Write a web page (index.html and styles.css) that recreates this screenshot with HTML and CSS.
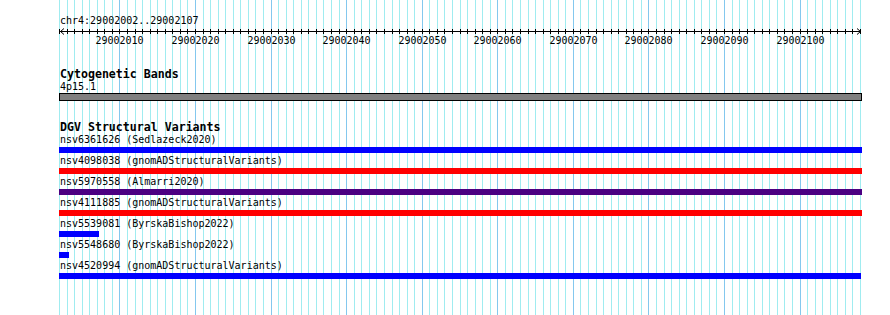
FILE: index.html
```html
<!DOCTYPE html>
<html lang="en">

<head>
    <meta charset="UTF-8">
    <meta name="viewport" content="width=device-width, initial-scale=1.0">
    <title>chr4:29002002..29002107</title>
    <link rel="stylesheet" href="styles.css">
</head>

<body>
    <div class="view">
        <div class="grid" id="grid"></div>

        <div class="ruler">
            <div class="location">chr4:29002002..29002107</div>
            <svg class="axis" id="axis" width="803" height="7">
                <line class="axis-line" x1="1" y1="4.5" x2="802" y2="4.5"></line>
                <polyline class="arrow" points="5,1.5 1.5,4.5 5,7.5"></polyline>
                <polyline class="arrow" points="798,1.5 801.5,4.5 798,7.5"></polyline>
            </svg>
            <div class="ticklabels" id="ticklabels"></div>
        </div>

        <div class="track bands">
            <div class="track-label">Cytogenetic Bands</div>
            <div class="feature-label">4p15.1</div>
            <div class="band"></div>
        </div>

        <div class="track dgv">
            <div class="track-label">DGV Structural Variants</div>
            <div class="feature">
                <div class="feature-label">nsv6361626 (Sedlazeck2020)</div>
                <div class="bar blue"></div>
            </div>
            <div class="feature">
                <div class="feature-label">nsv4098038 (gnomADStructuralVariants)</div>
                <div class="bar red"></div>
            </div>
            <div class="feature">
                <div class="feature-label">nsv5970558 (Almarri2020)</div>
                <div class="bar purple"></div>
            </div>
            <div class="feature">
                <div class="feature-label">nsv4111885 (gnomADStructuralVariants)</div>
                <div class="bar red"></div>
            </div>
            <div class="feature">
                <div class="feature-label">nsv5539081 (ByrskaBishop2022)</div>
                <div class="bar blue" style="width: 40px"></div>
            </div>
            <div class="feature">
                <div class="feature-label">nsv5548680 (ByrskaBishop2022)</div>
                <div class="bar blue" style="width: 10px"></div>
            </div>
            <div class="feature">
                <div class="feature-label">nsv4520994 (gnomADStructuralVariants)</div>
                <div class="bar blue" style="width: 802px"></div>
            </div>
        </div>
    </div>

    <script>
        var start = 29002002;
        var end = 29002107;
        var scale = 7.557; // pixels per base
        var svgNS = 'http://www.w3.org/2000/svg';

        var grid = document.getElementById('grid');
        var axis = document.getElementById('axis');
        var labels = document.getElementById('ticklabels');

        for (var k = 0; k <= end - start + 1; k++) {
            var pos = start + k;
            var x = Math.round(k * scale);
            var major = pos % 10 === 0;

            var line = document.createElement('div');
            line.className = major ? 'gridline major' : 'gridline';
            line.style.left = x + 'px';
            grid.appendChild(line);

            var tick = document.createElementNS(svgNS, 'line');
            tick.setAttribute('class', 'tick');
            tick.setAttribute('x1', x + 0.5);
            tick.setAttribute('x2', x + 0.5);
            tick.setAttribute('y1', 2);
            tick.setAttribute('y2', 7);
            axis.appendChild(tick);

            if (major) {
                var label = document.createElement('div');
                label.className = 'ticklabel';
                label.style.left = (x + 0.5) + 'px';
                label.textContent = pos;
                labels.appendChild(label);
            }
        }
    </script>
</body>

</html>
```

FILE: styles.css
```css
body {
    margin: 0;
    font-family: "DejaVu Sans Mono", "Liberation Mono", monospace;
    font-size: 10px;
    color: #000;
    background-color: #fff;
}

.view {
    position: relative;
    width: 803px;
    height: 315px;
    margin-left: 59px;
    overflow: hidden;
}

.grid {
    position: absolute;
    top: 0;
    bottom: 0;
    left: 0;
    width: 803px;
}

.gridline {
    position: absolute;
    top: 0;
    bottom: 0;
    width: 1px;
    background-color: #a0ecf0;
}

.gridline.major {
    background-color: #84c8ee;
}

.ruler,
.track {
    position: relative;
}

.location {
    padding: 15px 0 0 1px;
    line-height: 12px;
}

.axis {
    display: block;
    overflow: visible;
}

.axis-line,
.tick {
    stroke: #000;
    stroke-width: 1;
    shape-rendering: crispEdges;
}

.arrow {
    fill: none;
    stroke: #000;
    stroke-width: 1;
}

.ticklabels {
    position: relative;
    height: 12px;
    line-height: 12px;
}

.ticklabel {
    position: absolute;
    top: 1px;
    transform: translateX(-50%);
}

.bands {
    margin-top: 22px;
}

.dgv {
    margin-top: 20px;
}

.track-label {
    padding-left: 1px;
    font-weight: bold;
    font-size: 11.6px;
    line-height: 12px;
}

.feature-label {
    padding: 1px 0 0 1px;
    line-height: 12px;
    white-space: nowrap;
}

.band {
    height: 8px;
    border: 1px solid #000;
    background-color: #808080;
    box-sizing: border-box;
}

.feature {
    margin-bottom: 1px;
}

.bar {
    margin-top: 1px;
    height: 6px;
    width: 100%;
}

.blue {
    background-color: #0000ff;
}

.red {
    background-color: #ff0000;
}

.purple {
    background-color: #4b0082;
}
```
